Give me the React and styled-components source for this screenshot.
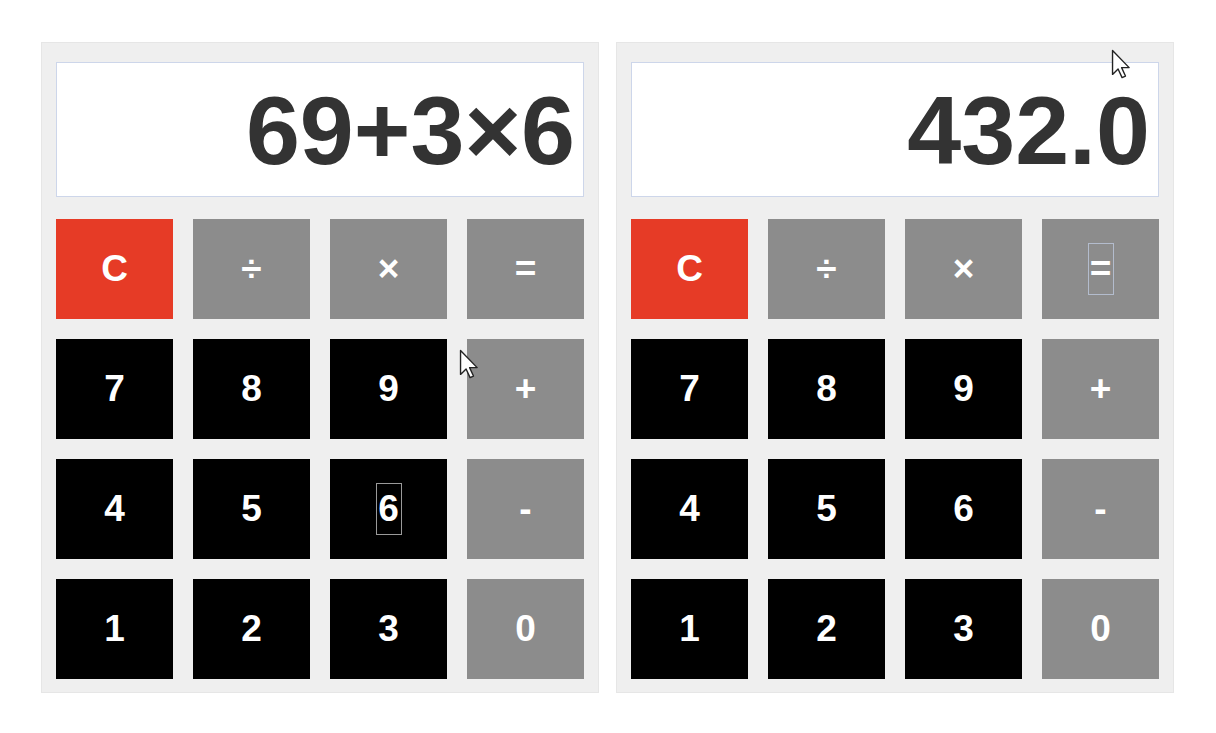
import React from "react";
import styled, { createGlobalStyle } from "styled-components";

const keys = [
  { label: "C", kind: "clear" },
  { label: "÷", kind: "op" },
  { label: "×", kind: "op" },
  { label: "=", kind: "op" },
  { label: "7" },
  { label: "8" },
  { label: "9" },
  { label: "+", kind: "op" },
  { label: "4" },
  { label: "5" },
  { label: "6" },
  { label: "-", kind: "op" },
  { label: "1" },
  { label: "2" },
  { label: "3" },
  { label: "0", kind: "op" },
];

const panels = [
  { value: "69+3×6", focused: "6", cursor: { left: 417, top: 306 } },
  { value: "432.0", focused: "=", cursor: { left: 494, top: 6 }, ringTint: "light" },
];

function Pointer() {
  return (
    <svg width="20" height="30" viewBox="0 0 13 19.5">
      <path
        d="M1 1 L1 16.5 L4.6 13 L7.2 18.6 L9.4 17.6 L6.9 12.1 L11.8 12.1 Z"
        fill="#fff"
        stroke="#222"
        strokeWidth="0.9"
        strokeLinejoin="round"
      />
    </svg>
  );
}

function Calculator({ value, focused, cursor, ringTint }) {
  return (
    <Panel>
      <Display>{value}</Display>
      <Keypad>
        {keys.map((k) => (
          <Key key={k.label} kind={k.kind}>
            {k.label === focused ? (
              <FocusRing tint={ringTint}>{k.label}</FocusRing>
            ) : (
              k.label
            )}
          </Key>
        ))}
      </Keypad>
      <Cursor style={{ left: cursor.left, top: cursor.top }}>
        <Pointer />
      </Cursor>
    </Panel>
  );
}

export default function App() {
  return (
    <>
      <GlobalStyle />
      <Page>
        {panels.map((p, i) => (
          <Calculator key={i} {...p} />
        ))}
      </Page>
    </>
  );
}

const GlobalStyle = createGlobalStyle`
  html, body {
    margin: 0;
    background: #fff;
    font-family: "Liberation Sans", Arial, sans-serif;
  }
`;

const Page = styled.div`
  display: flex;
  align-items: flex-start;
  gap: 17px;
  padding: 42px 0 0 41px;
  width: 1216px;
  height: 733px;
  box-sizing: border-box;
`;

const Panel = styled.div`
  position: relative;
  width: 558px;
  box-sizing: border-box;
  padding: 19px 14px 13px 14px;
  background: #efefef;
  border: 1px solid #e6e6e6;
`;

const Display = styled.div`
  height: 135px;
  box-sizing: border-box;
  display: flex;
  align-items: center;
  justify-content: flex-end;
  padding: 2px 8px 0 0;
  background: #fff;
  border: 1px solid #cdd6ea;
  color: #333;
  font-size: 97px;
  font-weight: bold;
  line-height: 1;
`;

const Keypad = styled.div`
  display: grid;
  grid-template-columns: repeat(4, 117px);
  grid-auto-rows: 100px;
  column-gap: 20px;
  row-gap: 20px;
  margin-top: 22px;
`;

const Key = styled.div`
  display: flex;
  align-items: center;
  justify-content: center;
  background: ${(p) =>
    p.kind === "clear" ? "#e63b26" : p.kind === "op" ? "#8c8c8c" : "#000"};
  color: #fff;
  font-size: 37px;
  font-weight: bold;
`;

const FocusRing = styled.span`
  display: inline-flex;
  align-items: center;
  justify-content: center;
  width: 24px;
  height: 50px;
  border: 1px solid ${(p) => (p.tint === "light" ? "#b3bccd" : "#9a9a9a")};
`;

const Cursor = styled.div`
  position: absolute;
  line-height: 0;
  pointer-events: none;
`;
